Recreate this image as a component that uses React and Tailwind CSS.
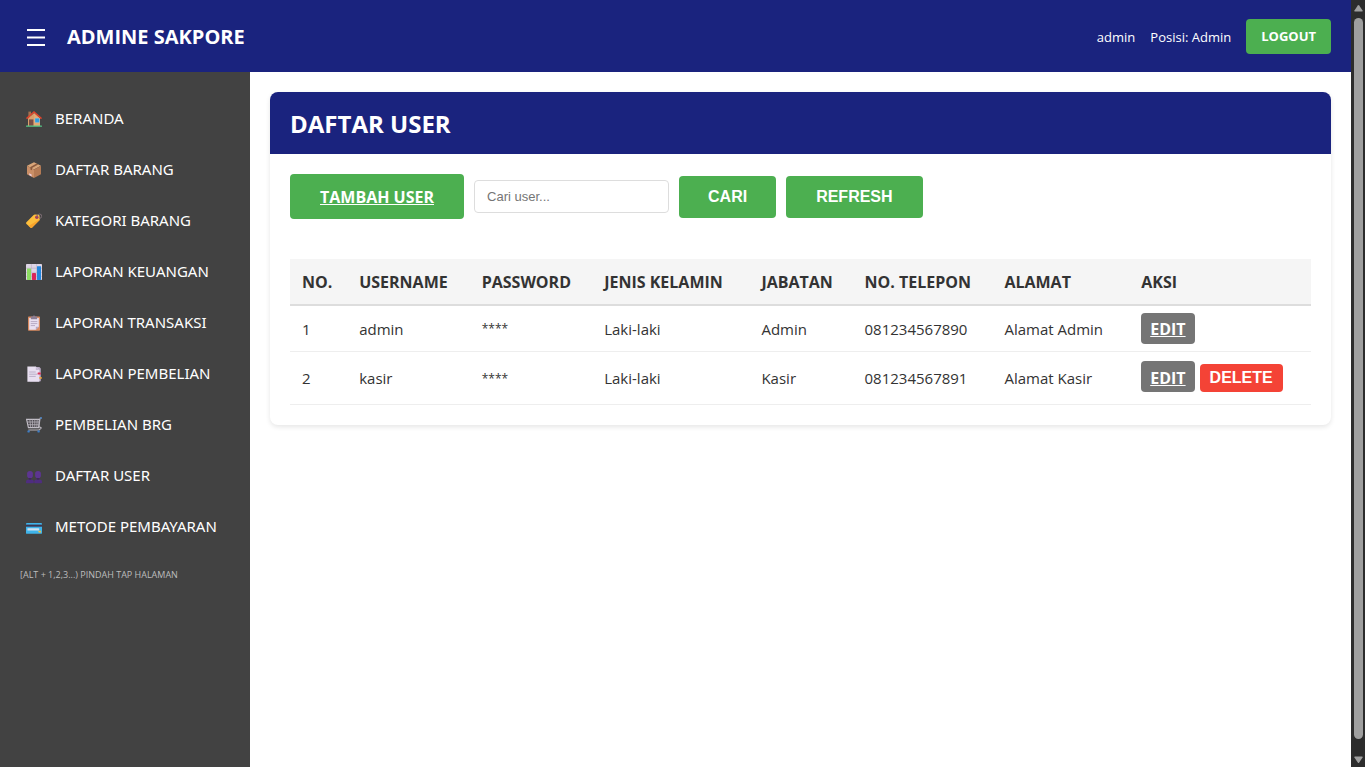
import React, { useState } from "react";

function Icon({ children }) {
  return (
    <svg viewBox="0 0 16 16" className="h-4 w-4 shrink-0" aria-hidden="true">
      {children}
    </svg>
  );
}

function HouseIcon() {
  return (
    <Icon>
      <rect x="2.4" y="0.6" width="2.6" height="6" fill="#a5714f" />
      <path d="M2 7.4 8 2l6 5.4V15H2z" fill="#dba06c" />
      <path d="M8 2l6 5.4V15H8z" fill="#e3aa76" />
      <rect x="3" y="8.4" width="4.4" height="6.6" fill="#7b4d45" />
      <rect x="9" y="7.2" width="4.4" height="4.2" rx="0.4" fill="#2e9ddf" stroke="#9fc9e0" strokeWidth="0.4" />
      <path d="M0.5 7.6 8 1l7.5 6.6" fill="none" stroke="#e0452c" strokeWidth="1.5" />
      <rect x="0" y="14.6" width="16" height="1.2" rx="0.6" fill="#57c987" />
    </Icon>
  );
}

function BoxIcon() {
  return (
    <Icon>
      <path d="M8 0.3 15 3.8 8 7.6 1 3.8z" fill="#d9a679" />
      <path d="M1 3.8 8 7.6V16l-7-3.8z" fill="#c98e66" />
      <path d="M15 3.8 8 7.6V16l7-3.8z" fill="#b47a54" />
      <path d="M10.6 1.6 4.4 5v2.4l1.6.9V5.9l6.2-3.4z" fill="#8b5a3e" />
      <path d="M3.2 11.3 5.6 12.6v1.8l-2.4-1.3z" fill="#efd0de" />
    </Icon>
  );
}

function TagIcon() {
  return (
    <Icon>
      <path d="M0.4 9.2 7.4 2.2Q8 1.6 9 1.6l3.4.2q1 .1 1.1 1l.3 3.4q0 .8-.6 1.4l-7 7q-1 .8-1.9 0L.5 11q-.9-.9-.1-1.8z" fill="#fdbe3c" />
      <path d="M2.6 13.1 13.8 6.200q0 .8-.6 1.400l-7 7q-1 .8-1.900 0z" fill="#f9a32b" />
      <circle cx="10.8" cy="4.3" r="1.7" fill="#a33a59" />
      <path d="M10.8 4.3Q11 1 13.5 1t2.1 2.5q-.3 2-2.4 2.1" fill="none" stroke="#85737b" strokeWidth="0.9" />
    </Icon>
  );
}

function ChartIcon() {
  return (
    <Icon>
      <rect width="16" height="16" rx="0.7" fill="#ded5e5" />
      <path d="M0 4.2h16M0 8.4h16M0 12.4h16M5.4 0v16M10.6 0v16" stroke="#b8aec3" strokeWidth="0.6" />
      <rect x="1" y="4.4" width="4" height="11.6" rx="0.4" fill="#8cdb62" />
      <rect x="6" y="9" width="4" height="7" rx="0.4" fill="#d8265b" />
      <rect x="11" y="2.2" width="4" height="13.8" rx="0.4" fill="#2387de" />
    </Icon>
  );
}

function ClipboardIcon() {
  return (
    <Icon>
      <rect x="2" y="1.4" width="12" height="14.4" rx="0.8" fill="#d98a60" />
      <path d="M3.2 3h9.6v8.7l-3 3H3.2z" fill="#e9e0f1" />
      <path d="M12.8 11.7h-3v3z" fill="#b4a5c2" />
      <path d="M5.4 1.5h1.3a1.4 1.4 0 0 1 2.6 0h1.3q.6 0 .6.7v2H4.8v-2q0-.7.6-.7z" fill="#8b7d93" />
      <path d="M4.7 6.6h6.6M4.7 8.6h6.6M4.7 10.6H9" stroke="#a99cb8" strokeWidth="0.8" />
    </Icon>
  );
}

function DocumentTabsIcon() {
  return (
    <Icon>
      <path d="M4 1h9.4l1.4 1.6v12.6H4z" fill="#b9aac5" />
      <path d="M1.4 0.4h8.4l3.6 3.7v11.7h-12z" fill="#e8dff0" />
      <path d="M9.8.4v3.7h3.6z" fill="#c6b8d3" />
      <path d="M3.2 6h6.5M3.2 8.2h8M3.2 10.4h6.5" stroke="#b0a2be" strokeWidth="0.8" />
      <rect x="11.6" y="6.6" width="3.2" height="2" rx="0.4" fill="#dc3459" />
      <rect x="13.2" y="11" width="2.6" height="1.8" rx="0.4" fill="#eea43a" />
    </Icon>
  );
}

function CartIcon() {
  return (
    <Icon>
      <path d="M15.4 1h-1.2l-1.5 9.6" fill="none" stroke="#a9a4ad" strokeWidth="1.1" />
      <path d="M14.2 1h1.8" stroke="#4784c8" strokeWidth="1.4" />
      <path d="M.6 2.4h12.8L12.6 10.6H2.4z" fill="#4d4950" stroke="#c4c0c9" strokeWidth="1.1" />
      <path d="M1 5h12M1.7 7.7h11M3.8 2.4l.9 8.2M6.3 2.4l.4 8.2M8.800 2.4v8.2M11.200 2.4l-.4 8.2" stroke="#b4b0b8" strokeWidth="0.8" />
      <path d="M2.4 13h10.8l2-2-2.2-1.4" fill="none" stroke="#b4b0b8" strokeWidth="1.2" />
      <circle cx="2.6" cy="14.4" r="1.2" fill="#3e7dc4" />
      <circle cx="12.6" cy="14.4" r="1.2" fill="#3e7dc4" />
    </Icon>
  );
}

function UsersIcon() {
  return (
    <Icon>
      <path d="M0 14.6v-1q0-2.2 2.3-2.2h3.2q2.3 0 2.3 2.2v1q0 .6-.6.6H.6q-.6 0-.6-.6z" fill="#4f2d80" />
      <path d="M8.2 14.6v-1q0-2.2 2.3-2.2h3.2q2.3 0 2.3 2.2v1q0 .6-.6.6H8.800q-.6 0-.6-.6z" fill="#4f2d80" />
      <rect x="1.1" y="3" width="5.8" height="7.4" rx="2.8" fill="#5d3591" />
      <rect x="9.1" y="3" width="5.8" height="7.4" rx="2.8" fill="#5d3591" />
      <path d="M2.8 10.8h2.4M10.8 10.8h2.4" stroke="#3a215f" strokeWidth="1.2" />
    </Icon>
  );
}

function CardIcon() {
  return (
    <Icon>
      <rect y="4" width="16" height="10.8" rx="0.9" fill="#3fb4ea" />
      <rect y="5.6" width="16" height="2.1" fill="#3c3550" />
      <rect x="1.4" y="9.2" width="11.8" height="2.2" rx="0.5" fill="#cfe0f0" />
      <rect x="12.6" y="11.8" width="2.4" height="1.8" rx="0.4" fill="#f0c13d" />
    </Icon>
  );
}

const menu = [
  { label: "BERANDA", icon: HouseIcon },
  { label: "DAFTAR BARANG", icon: BoxIcon },
  { label: "KATEGORI BARANG", icon: TagIcon },
  { label: "LAPORAN KEUANGAN", icon: ChartIcon },
  { label: "LAPORAN TRANSAKSI", icon: ClipboardIcon },
  { label: "LAPORAN PEMBELIAN", icon: DocumentTabsIcon },
  { label: "PEMBELIAN BRG", icon: CartIcon },
  { label: "DAFTAR USER", icon: UsersIcon },
  { label: "METODE PEMBAYARAN", icon: CardIcon },
];

const columns = [
  { label: "NO.", width: "w-[5.6%]" },
  { label: "USERNAME", width: "w-[12%]" },
  { label: "PASSWORD", width: "w-[12%]" },
  { label: "JENIS KELAMIN", width: "w-[15.4%]" },
  { label: "JABATAN", width: "w-[10.1%]" },
  { label: "NO. TELEPON", width: "w-[13.7%]" },
  { label: "ALAMAT", width: "w-[13.4%]" },
  { label: "AKSI", width: "w-auto" },
];

const users = [
  { username: "admin", gender: "Laki-laki", role: "Admin", phone: "081234567890", address: "Alamat Admin", deletable: false },
  { username: "kasir", gender: "Laki-laki", role: "Kasir", phone: "081234567891", address: "Alamat Kasir", deletable: true },
];

function Header({ onToggle }) {
  return (
    <header className="flex h-[72px] items-center justify-between bg-[#1a237e] pr-5 pl-[26px] text-white">
      <div className="flex items-center gap-[21px] pt-0.5">
        <button type="button" aria-label="Menu" onClick={onToggle}>
          <svg viewBox="0 0 20 20" className="h-5 w-5" aria-hidden="true">
            <path d="M1 3h18M1 10.5h18M1 18h18" stroke="#fff" strokeWidth="2" />
          </svg>
        </button>
        <h1 className="text-xl leading-7 font-bold">ADMINE SAKPORE</h1>
      </div>
      <div className="flex items-center gap-[15px] text-[13px]">
        <span className="pt-1">admin</span>
        <span className="pt-1">Posisi: Admin</span>
        <a href="#logout" className="flex h-[35px] items-center rounded bg-[#4caf50] px-[15px] pt-0.5 font-bold">
          LOGOUT
        </a>
      </div>
    </header>
  );
}

function Sidebar() {
  return (
    <aside className="w-[250px] shrink-0 bg-[#424242] pt-[21px] text-white">
      <nav>
        <ul>
          {menu.map(({ label, icon: MenuIcon }) => (
            <li key={label}>
              <a href={"#" + label.toLowerCase().replace(/ /g, "-")} className="flex h-[51px] items-center gap-[13px] pl-[26px] font-['Noto_Sans',sans-serif] text-[15px] whitespace-nowrap">
                <MenuIcon />
                {label}
              </a>
            </li>
          ))}
        </ul>
      </nav>
      <p className="mt-[15px] pl-5 text-[9px] leading-4 text-[#bdbdbd]">[ALT + 1,2,3...) PINDAH TAP HALAMAN</p>
    </aside>
  );
}

function UserRow({ user, number }) {
  return (
    <tr className={user.deletable ? "h-[53px] border-b border-[#eeeeee]" : "h-[46px] border-b border-[#eeeeee]"}>
      <td className="px-3 pt-0.5">{number}</td>
      <td className="px-3 pt-0.5">{user.username}</td>
      <td className="px-3 pt-0.5 text-xs">****</td>
      <td className="px-3 pt-0.5">{user.gender}</td>
      <td className="px-3 pt-0.5">{user.role}</td>
      <td className="px-3 pt-0.5">{user.phone}</td>
      <td className="px-3 pt-0.5">{user.address}</td>
      <td className={user.deletable ? "px-3 pb-0.5" : "px-3"}>
        <div className="flex items-end gap-[5px]">
          <a href={"#edit-" + user.username} className="flex h-[31px] items-center rounded bg-[#757575] px-[9px] pt-0.5 text-base font-bold text-white underline">
            EDIT
          </a>
          {user.deletable && (
            <button type="button" className="h-7 rounded bg-[#f44336] px-[10px] font-['Liberation_Sans',sans-serif] text-base leading-7 font-bold text-white">
              DELETE
            </button>
          )}
        </div>
      </td>
    </tr>
  );
}

function UserCard() {
  const [query, setQuery] = useState("");
  return (
    <section className="overflow-hidden rounded-lg bg-white shadow-[0_2px_5px_rgba(0,0,0,0.1)]">
      <h2 className="bg-[#1a237e] px-5 pt-4 pb-[14px] text-2xl leading-8 font-bold text-white">DAFTAR USER</h2>
      <div className="p-5">
        <form className="mb-10 flex items-center gap-[10px]" onSubmit={(e) => e.preventDefault()}>
          <a href="#tambah-user" className="flex h-[45px] items-center rounded bg-[#4caf50] px-[30px] text-base font-bold text-white underline">
            TAMBAH USER
          </a>
          <input
            type="text"
            aria-label="Cari user"
            placeholder="Cari user..."
            value={query}
            onChange={(e) => setQuery(e.target.value)}
            className="h-[33px] w-[195px] rounded border border-[#dddddd] px-3 font-['Liberation_Sans',sans-serif] text-[13px] placeholder:text-[#757575]"
          />
          <button type="submit" className="h-[42px] rounded bg-[#4caf50] px-[29px] font-['Liberation_Sans',sans-serif] text-base font-bold text-white">
            CARI
          </button>
          <button type="button" onClick={() => setQuery("")} className="h-[42px] rounded bg-[#4caf50] px-[30px] font-['Liberation_Sans',sans-serif] text-base font-bold text-white">
            REFRESH
          </button>
        </form>
        <table className="w-full table-fixed border-collapse text-left text-[15px] whitespace-nowrap text-[#333333]">
          <thead>
            <tr className="h-[46px] border-b-2 border-[#dddddd] bg-[#f5f5f5]">
              {columns.map((column) => (
                <th key={column.label} scope="col" className={column.width + " px-3 text-base font-bold"}>
                  {column.label}
                </th>
              ))}
            </tr>
          </thead>
          <tbody>
            {users.map((user, index) => (
              <UserRow key={user.username} user={user} number={index + 1} />
            ))}
          </tbody>
        </table>
      </div>
    </section>
  );
}

function ScrollTrack() {
  return (
    <div className="sticky top-0 flex h-screen w-[14px] shrink-0 flex-col items-center bg-[#2c2c2c] pt-1 pb-[3px]" aria-hidden="true">
      <svg viewBox="0 0 9 8" className="h-2 w-[9px]">
        <path d="M3.8 1.4q.7-1 1.4 0l3.4 5q.6 1.1-.5 1.1H.9q-1.1 0-.5-1.1z" fill="#9f9f9f" />
      </svg>
      <div className="mt-[6px] mb-[17px] w-[9px] flex-1 rounded-full bg-[#9f9f9f]" />
      <svg viewBox="0 0 9 8" className="h-2 w-[9px]">
        <path d="M3.8 6.6q.7 1 1.4 0l3.4-5Q9.2.5 8.1.5H.9Q-.2.5.4 1.6z" fill="#9f9f9f" />
      </svg>
    </div>
  );
}

export default function App() {
  const [open, setOpen] = useState(true);
  return (
    <div className="flex min-h-screen bg-white font-['Open_Sans',sans-serif]">
      <div className="flex min-w-0 flex-1 flex-col">
        <Header onToggle={() => setOpen(!open)} />
        <div className="flex flex-1">
          {open && <Sidebar />}
          <main className="min-w-0 flex-1 p-5">
            <UserCard />
          </main>
        </div>
      </div>
      <ScrollTrack />
    </div>
  );
}
